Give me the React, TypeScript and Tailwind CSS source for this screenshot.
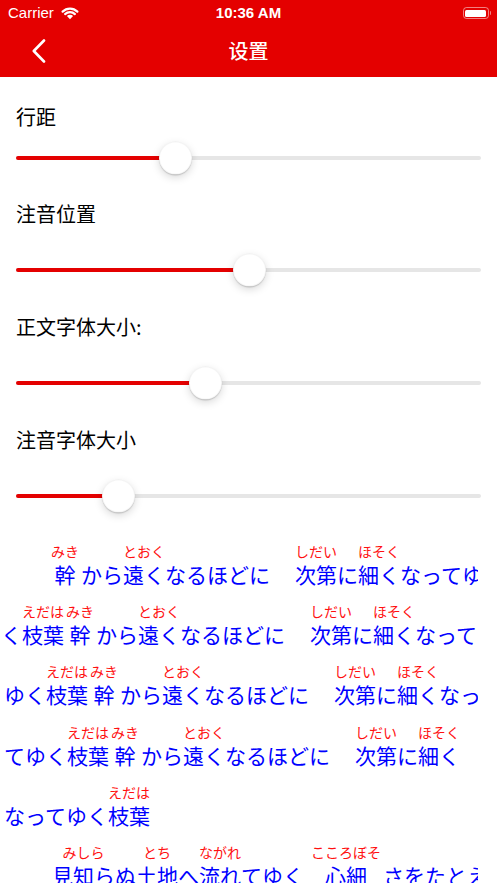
import type { ReactNode } from "react";

const RED = "bg-[#e40000]";

type Seg = { b: string; r?: string } | { gap: number };

const KAN: Seg = { b: "幹", r: "みき" };
const KARA: Seg = { b: "から" };
const TOOKU: Seg = { b: "遠く", r: "とおく" };
const NARU: Seg = { b: "なるほどに" };
const SPACE: Seg = { gap: 25 };
const SHIDAI: Seg = { b: "次第", r: "しだい" };
const NI: Seg = { b: "に" };
const HOSOKU: Seg = { b: "細く", r: "ほそく" };
const EDAHA: Seg = { b: "枝葉", r: "えだは" };

const LINES: { offset: string; segs: Seg[] }[] = [
  { offset: "ml-[49px]", segs: [KAN, KARA, TOOKU, NARU, SPACE, SHIDAI, NI, HOSOKU, { b: "なってゆく" }] },
  { offset: "ml-[1px]", segs: [{ b: "く" }, EDAHA, KAN, KARA, TOOKU, NARU, SPACE, SHIDAI, NI, HOSOKU, { b: "なって" }] },
  { offset: "ml-[4px]", segs: [{ b: "ゆく" }, EDAHA, KAN, KARA, TOOKU, NARU, SPACE, SHIDAI, NI, HOSOKU, { b: "なっ" }] },
  { offset: "ml-[4px]", segs: [{ b: "てゆく" }, EDAHA, KAN, KARA, TOOKU, NARU, SPACE, SHIDAI, NI, HOSOKU] },
  { offset: "ml-[4px]", segs: [{ b: "なってゆく" }, EDAHA] },
  {
    offset: "ml-[52px]",
    segs: [
      { b: "見知ら", r: "みしら" },
      { b: "ぬ" },
      { b: "土地", r: "とち" },
      { b: "へ" },
      { b: "流れ", r: "ながれ" },
      { b: "てゆく" },
      { gap: 5 },
      { b: "心細", r: "こころぼそ" },
      { b: "さをたとえ" },
    ],
  },
];

// thumb centre measured from the track start (track is 465px wide)
const SLIDERS = [
  { label: "行距", pos: 159.5, labelH: "h-[39px]" },
  { label: "注音位置", pos: 233, labelH: "h-[68px]" },
  { label: "正文字体大小:", pos: 189, labelH: "h-[69px]" },
  { label: "注音字体大小", pos: 102, labelH: "h-[69px]" },
];

function WifiIcon() {
  return (
    <svg width="18" height="13" viewBox="0 0 18 13" fill="none">
      <path d="M1.6 4.6 A10.5 10.5 0 0 1 16.4 4.6" stroke="white" strokeWidth="2.2" strokeLinecap="round" />
      <path d="M4.1 7.1 A7 7 0 0 1 13.9 7.1" stroke="white" strokeWidth="2.2" strokeLinecap="round" />
      <path d="M9 12.2 L5.9 9.1 A4.4 4.4 0 0 1 12.1 9.1 Z" fill="white" />
    </svg>
  );
}

function StatusBar() {
  return (
    <div className="grid h-[24px] grid-cols-[120px_1fr_120px] items-center pt-[2px] text-[15px] text-white [font-family:'Liberation_Sans',Arial,sans-serif]">
      <div className="flex items-center gap-[7px] pl-[8px]">
        <span>Carrier</span>
        <WifiIcon />
      </div>
      <div className="text-center font-semibold">10:36 AM</div>
      <div className="flex items-center justify-end pr-[6px]">
        <div className="h-[12px] w-[26px] rounded-[3.5px] border border-white/50 p-[1.5px]">
          <div className="h-full w-full rounded-[1.5px] bg-white" />
        </div>
        <div className="ml-[1px] h-[4px] w-[1.5px] rounded-r-sm bg-white/50" />
      </div>
    </div>
  );
}

function NavBar() {
  return (
    <div className="grid h-[53px] grid-cols-[80px_1fr_80px] items-center">
      <div className="pl-[32px]">
        <svg width="14" height="24" viewBox="0 0 14 24" fill="none">
          <polyline points="12,1.5 1.8,12 12,22.5" stroke="white" strokeWidth="2.6" strokeLinecap="round" strokeLinejoin="round" />
        </svg>
      </div>
      <div className="text-center text-[20px] font-medium text-white">设置</div>
      <div />
    </div>
  );
}

function Slider({ pos }: { pos: number }) {
  return (
    <div className="flex h-[44px] items-center px-4">
      <div className="relative h-[4px] w-full rounded-full bg-[#e6e6e6]">
        <div className={`h-full rounded-full ${RED}`} style={{ width: pos }} />
        <div
          className="absolute top-1/2 h-[33px] w-[33px] -translate-y-1/2 rounded-full border border-black/[0.04] bg-white shadow-[0_3px_8px_rgba(0,0,0,0.15),0_1px_1px_rgba(0,0,0,0.16)]"
          style={{ left: pos - 16.5 }}
        />
      </div>
    </div>
  );
}

function Segment({ seg }: { seg: Seg }) {
  if ("gap" in seg) return <div className="shrink-0" style={{ width: seg.gap }} />;
  const wide = seg.r ? seg.r.length * 14 > seg.b.length * 21 : false;
  return (
    <div className={`flex shrink-0 flex-col items-center whitespace-nowrap ${wide ? "px-[2px]" : ""}`}>
      <span className="h-[19px] text-[14px] leading-[19px] text-[#ff1010]">{seg.r ?? ""}</span>
      <span className="text-[21px] leading-[26px] text-[#0000ff]">{seg.b}</span>
    </div>
  );
}

function RubyLine({ offset, children }: { offset: string; children: ReactNode }) {
  return <div className={`flex h-[60.4px] items-start ${offset}`}>{children}</div>;
}

export default function App() {
  return (
    <div className="h-[883px] w-[497px] overflow-hidden bg-white [font-family:'Noto_Sans_CJK_SC','Noto_Sans_CJK_JP',sans-serif]">
      <div className={RED}>
        <StatusBar />
        <NavBar />
      </div>

      <div className="pt-[20px]">
        {SLIDERS.map((s) => (
          <div key={s.label}>
            <div className={`flex items-center px-4 text-[20px] text-black ${s.labelH}`}>{s.label}</div>
            <Slider pos={s.pos} />
          </div>
        ))}
      </div>

      <div className="mt-[23.5px] w-[478px] overflow-hidden [font-family:'Noto_Sans_CJK_JP',sans-serif]">
        {LINES.map((line, i) => (
          <RubyLine key={i} offset={line.offset}>
            {line.segs.map((seg, j) => (
              <Segment key={j} seg={seg} />
            ))}
          </RubyLine>
        ))}
      </div>
    </div>
  );
}
